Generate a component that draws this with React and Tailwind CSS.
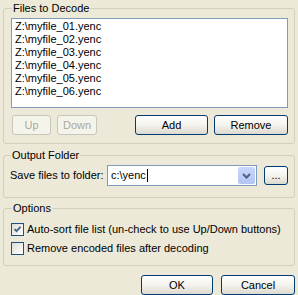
import React, { useState } from "react";

const files = [
  "Z:\\myfile_01.yenc",
  "Z:\\myfile_02.yenc",
  "Z:\\myfile_03.yenc",
  "Z:\\myfile_04.yenc",
  "Z:\\myfile_05.yenc",
  "Z:\\myfile_06.yenc",
];

function XpButton({ children, disabled, className = "" }) {
  return (
    <button
      disabled={disabled}
      className={
        "h-[20px] rounded-[3px] border text-[11px] leading-none " +
        (disabled
          ? "border-[#C9C7BA] bg-[#F5F4EA] text-[#ACA899] "
          : "border-[#003C74] bg-gradient-to-b from-white via-[#F4F3EE] to-[#DCD9CF] text-black ") +
        className
      }
    >
      {children}
    </button>
  );
}

function Group({ title, children, className = "" }) {
  return (
    <fieldset
      className={
        "rounded-[3px] border border-[#D0D0BF] px-[6px] " + className
      }
    >
      <legend className="ml-[1px] px-[1px] text-[11px] leading-[13px] text-black">
        {title}
      </legend>
      {children}
    </fieldset>
  );
}

function CheckBox({ checked, label }) {
  return (
    <label className="flex h-[13px] items-center gap-[3px]">
      <span className="flex h-[13px] w-[13px] items-center justify-center border border-[#1C5180] bg-gradient-to-br from-[#DCDCD7] to-white">
        {checked && (
          <svg width="9" height="9" viewBox="0 0 9 9">
            <path
              d="M1.5 4 L3.5 6.2 L7.5 1.8"
              fill="none"
              stroke="#3E6386"
              strokeWidth="1.8"
            />
          </svg>
        )}
      </span>
      <span className="text-[11px] leading-[13px] text-black">{label}</span>
    </label>
  );
}

export default function App() {
  const [folder] = useState("c:\\yenc");

  return (
    <div
      className="flex h-[295px] w-[298px] flex-col overflow-hidden bg-[#ECE9D8] px-[3px] pt-[2px]"
      style={{ fontFamily: '"Liberation Sans", Arial, sans-serif' }}
    >
      {/* Files to Decode */}
      <Group title="Files to Decode" className="w-[292px] pb-[8px] pl-[7px]">
        <div className="mt-[3px] h-[90px] w-[277px] border border-[#7F9DB9] bg-white px-[3px] pt-[1px]">
          {files.map((f) => (
            <div key={f} className="text-[11px] leading-[13px] text-black">
              {f}
            </div>
          ))}
        </div>
        <div className="mt-[7px] flex items-center">
          <XpButton disabled className="ml-[1px] w-[39px]">
            Up
          </XpButton>
          <XpButton disabled className="ml-[6px] w-[40px]">
            Down
          </XpButton>
          <XpButton className="ml-auto w-[73px]">Add</XpButton>
          <XpButton className="ml-[6px] w-[74px]">Remove</XpButton>
        </div>
      </Group>

      {/* Output Folder */}
      <Group title="Output Folder" className="mt-[5px] w-[292px] pb-[11px]">
        <div className="mt-[3px] flex items-center">
          <span className="text-[11px] leading-[13px] text-black">
            Save files to folder:
          </span>
          <div className="ml-auto flex h-[21px] w-[150px] items-center border border-[#7F9DB9] bg-white pl-[3px] pr-[1px]">
            <span className="flex-1 text-[11px] leading-[13px] text-black">
              {folder}
              <span className="ml-[1px] inline-block h-[13px] w-[1px] bg-black align-top" />
            </span>
            <span className="flex h-[17px] w-[17px] items-center justify-center rounded-[2px] bg-gradient-to-b from-[#C8D7FC] to-[#B2C6F5]">
              <svg width="9" height="6" viewBox="0 0 9 6">
                <path
                  d="M1 1 L4.5 4.5 L8 1"
                  fill="none"
                  stroke="#4D6185"
                  strokeWidth="2"
                />
              </svg>
            </span>
          </div>
          <XpButton className="ml-[7px] w-[24px] !h-[19px]">...</XpButton>
        </div>
      </Group>

      {/* Options */}
      <Group title="Options" className="mt-[4px] w-[292px] pb-[10px] pl-[7px]">
        <div className="mt-[8px] flex flex-col gap-[6px]">
          <CheckBox
            checked
            label="Auto-sort file list (un-check to use Up/Down buttons)"
          />
          <CheckBox label="Remove encoded files after decoding" />
        </div>
      </Group>

      <div className="mt-[9px] flex justify-end pr-[0px]">
        <XpButton className="w-[72px]">OK</XpButton>
        <XpButton className="ml-[8px] w-[74px]">Cancel</XpButton>
      </div>
    </div>
  );
}
